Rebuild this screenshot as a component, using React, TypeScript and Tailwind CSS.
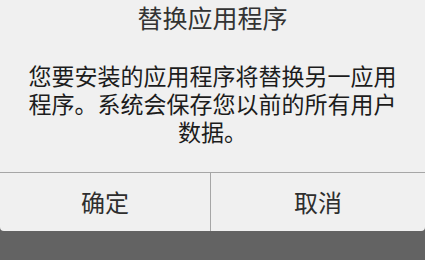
export default function App() {
  return (
    <div
      className="flex h-[260px] w-[425px] flex-col overflow-hidden bg-[#636363]"
      style={{ fontFamily: '"Noto Sans CJK SC", "Noto Sans", sans-serif' }}
    >
      <div className="flex flex-col rounded-b-[4px] bg-[#f0f0f0]">
        {/* Title */}
        <div className="text-center text-[25px] leading-[34px] text-[#333333]">替换应用程序</div>

        {/* Message */}
        <p className="mt-[27px] px-6 text-center text-[23px] leading-[28px] text-[#1c1c1c]">
          您要安装的应用程序将替换另一应用程序。系统会保存您以前的所有用户数据。
        </p>

        {/* Buttons */}
        <div className="mt-[27px] grid h-[59px] grid-cols-[211px_1fr] border-t border-[#a6a6a6]">
          <button className="border-r border-[#a6a6a6] text-[24px] text-[#2e2e2e]">确定</button>
          <button className="text-[24px] text-[#2e2e2e]">取消</button>
        </div>
      </div>
    </div>
  );
}
